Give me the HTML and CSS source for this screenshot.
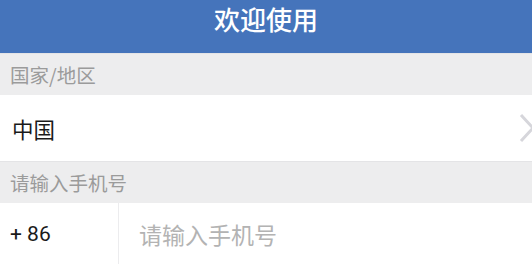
FILE: index.html
```html
<!DOCTYPE html>
<html lang="zh-CN">
<head>
  <meta charset="UTF-8">
  <meta name="viewport" content="width=device-width, initial-scale=1.0">
  <title>欢迎使用</title>
  <link rel="stylesheet" href="styles.css">
</head>
<body>
  <!-- Header -->
  <div class="header">
    <h1>欢迎使用</h1>
  </div>

  <!-- Country -->
  <div class="section-label">国家/地区</div>
  <div class="row country-row">
    <span class="country">中国</span>
    <svg class="chevron" width="18" height="30" viewBox="0 0 18 30">
      <polyline points="3,2 15,15 3,28" fill="none" stroke="#d6d6db" stroke-width="3"/>
    </svg>
  </div>

  <!-- Phone -->
  <div class="section-label">请输入手机号</div>
  <div class="row phone-row">
    <div class="prefix">+ 86</div>
    <input class="phone-input" type="tel" placeholder="请输入手机号">
  </div>
</body>
</html>
```

FILE: styles.css
```css
body {
  margin: 0;
  padding: 0;
  font-family: "Noto Sans CJK SC", "Noto Sans", sans-serif;
  background-color: #ffffff;
  overflow: hidden;
}
.header {
  height: 53px;
  background-color: #4574bb; /* Title bar blue */
  color: #ffffff;
  text-align: center;
}
.header h1 {
  margin: 0;
  padding-top: 1px;
  font-size: 26px;
  font-weight: 500;
  line-height: 36px;
}
.section-label {
  height: 41px;
  line-height: 41px;
  padding-left: 10px;
  font-size: 19.5px;
  color: #9b9b9b;
  background-color: #ededee;
  border-top: 1px solid #e4e4e6;
}
.row {
  background-color: #ffffff;
  display: flex;
  align-items: center;
}
.country-row {
  height: 66px;
  padding-left: 12px;
  justify-content: space-between;
}
.country {
  font-size: 21.5px;
  color: #1a1a1a;
}
.chevron {
  margin-right: -4px;
}
.phone-row {
  height: 62px;
}
.prefix {
  width: 108px;
  height: 100%;
  padding-left: 10px;
  display: flex;
  align-items: center;
  font-family: "Roboto", "Noto Sans", sans-serif;
  font-size: 21px;
  color: #1a1a1a;
  border-right: 1px solid #ececee;
}
.phone-input {
  flex: 1;
  height: 100%;
  padding: 0 0 0 20px;
  border: none;
  outline: none;
  font-family: "Noto Sans CJK SC", sans-serif;
  font-size: 23px;
  color: #1a1a1a;
  background: transparent;
}
.phone-input::placeholder {
  color: #b3b3b3;
}
```
